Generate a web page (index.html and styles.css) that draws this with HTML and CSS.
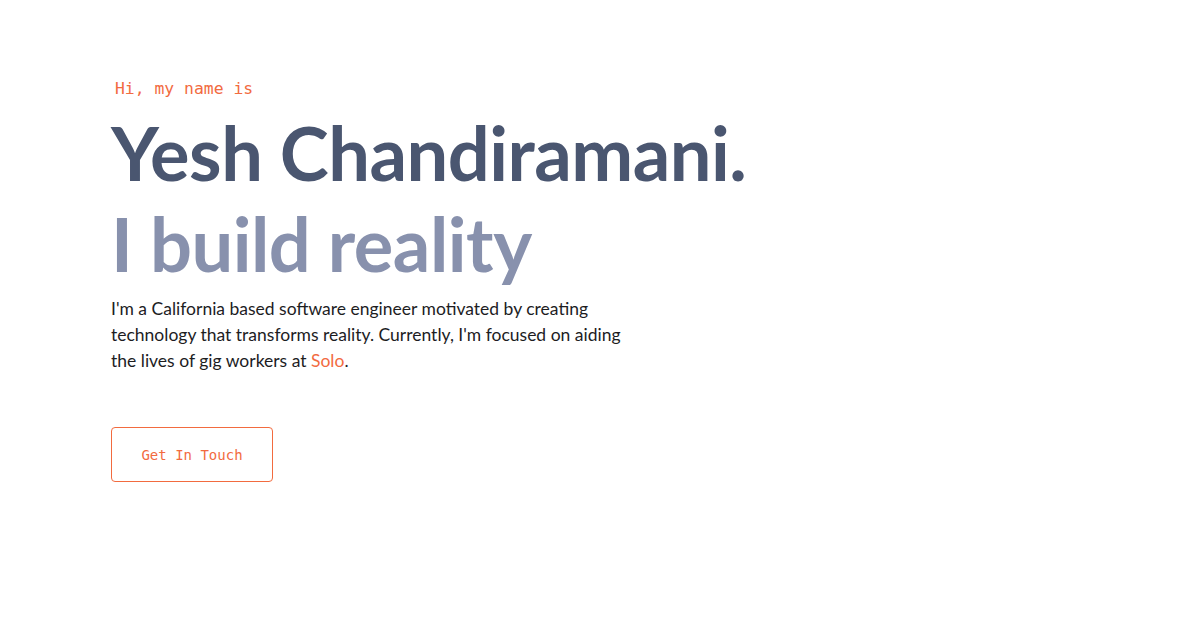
FILE: index.html
```html
<!DOCTYPE html>
<html>
<head>
<meta charset="utf-8">
<link rel="stylesheet" href="styles.css">
</head>
<body>
<main class="hero">
  <p class="intro">Hi, my name is</p>
  <h1 class="name">Yesh Chandiramani.</h1>
  <h2 class="tagline">I build reality</h2>
  <p class="bio">I'm a California based software engineer motivated by creating technology that transforms reality. Currently, I'm focused on aiding the lives of gig workers at <a class="link" href="#">Solo</a>.</p>
  <a class="cta" href="#">Get In Touch</a>
</main>
</body>
</html>
```

FILE: styles.css
```css
html, body {
  margin: 0;
  padding: 0;
  background: #ffffff;
}
.hero {
  display: flex;
  flex-direction: column;
  align-items: flex-start;
  padding: 78px 0 0 111px;
}
.intro {
  margin: 0 0 0 4px;
  font-family: "DejaVu Sans Mono", monospace;
  font-size: 16.4px;
  line-height: 22px;
  color: #f26b3f;
}
.name, .tagline {
  margin: 0;
  font-family: "Lato", sans-serif;
  font-weight: 700;
  font-size: 74px;
  line-height: 88px;
  letter-spacing: -0.5px;
}
.name {
  margin-top: 9px;
  color: #4a5670;
}
.tagline {
  margin-top: 3px;
  color: #8891ad;
}
.bio {
  margin: 8px 0 0;
  max-width: 530px;
  font-family: "Lato", sans-serif;
  font-size: 17.5px;
  line-height: 26px;
  color: #1d1d1f;
}
.link {
  color: #f26b3f;
  text-decoration: none;
}
.cta {
  margin-top: 53px;
  box-sizing: border-box;
  width: 162px;
  height: 55px;
  display: flex;
  align-items: center;
  justify-content: center;
  border: 1px solid #f26b3f;
  border-radius: 4px;
  font-family: "DejaVu Sans Mono", monospace;
  font-size: 14px;
  color: #f26b3f;
  text-decoration: none;
}
```
